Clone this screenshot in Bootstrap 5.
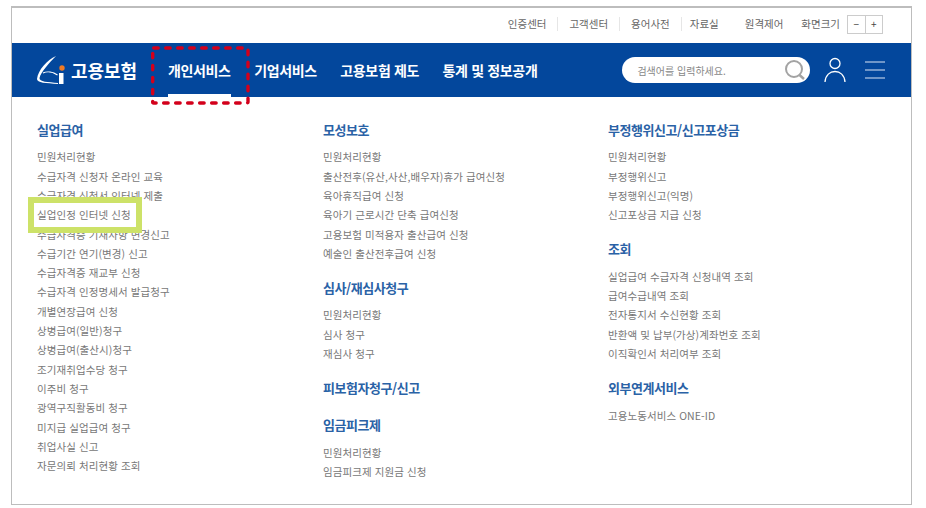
<!DOCTYPE html>
<html lang="ko"><head><meta charset="utf-8"><title>고용보험</title>
<link href="https://cdn.jsdelivr.net/npm/bootstrap@5.3.0/dist/css/bootstrap.min.css" rel="stylesheet">
<style>
html,body{margin:0;background:#fff;height:508px;overflow:hidden}
body{font-family:"Noto Sans CJK KR","Noto Sans",sans-serif;color:#666}
.frame{margin:6px 0 0 11px;width:901px;height:499px;border:1px solid #bdbdbd;border-top-width:2px;position:relative}
.topline{height:35px;padding:0 28px 3px 0;font-size:10.5px;color:#666;white-space:nowrap}
.topline .tl{padding:0 11px;line-height:14px;border-left:1px solid #e6e6e6}
.topline .tl:first-child,.topline .tl.nob{border-left:0}
.topline .tl.pr{padding-left:8px}
.topline .tl.rc{padding-left:15px}
.topline .tl.sz{padding:0 7px 0 7px}
.sizer{display:flex;border:1px solid #ccc;height:19px;width:36px;font-size:10px;line-height:16px;text-align:center;color:#444}
.sizer i{flex:1;font-style:normal}.sizer i+i{border-left:1px solid #ccc}
.band{height:54px;background:#03479c;padding-left:24px;color:#fff}
.brand{font-size:18px;font-weight:700;color:#fff;letter-spacing:-.1px;margin-left:4px;width:66px;white-space:nowrap;line-height:1}
.gnb{font-size:14px;font-weight:700;letter-spacing:-.35px;white-space:nowrap;margin-left:31px}
.gnb a{color:#fff;text-decoration:none;position:relative;display:block;height:54px;line-height:54px;margin-right:23.500px}
.gnb a.on::after{content:"";position:absolute;left:0;right:0;bottom:0;height:3px;background:#fff}
.sbox{width:188px;height:26px;border-radius:13px;background:#fff;margin-left:85px;font-size:10px;color:#888;padding:0 0 0 15px}
.usr{margin-left:14px}.ham{margin-left:19px}
.cols{padding:23px 0 0 25px}
.c1{width:286px}.c2{width:285px}.c3{flex:1}
.ttl{font-size:13px;font-weight:700;color:#2a62a6;letter-spacing:-.45px;line-height:20px;margin:0}
.lst{list-style:none;padding:0;margin:7.400px 0 14.900px;font-size:10.500px;letter-spacing:.08px;line-height:19.300px;color:#777;white-space:nowrap}
.hl{position:relative;z-index:1}
.hl::before{content:"";position:absolute;left:-9px;top:-8px;width:114px;height:35.500px;border:6px solid #cde268;background:#fff;z-index:-1}
.dash{position:absolute;left:139px;top:38px;width:100px;height:60px;overflow:visible}
.ttl.solo{margin-bottom:17px}
</style></head><body>
<div class="frame">
 <div class="topline d-flex align-items-center justify-content-end">
  <span class="tl">인증센터</span><span class="tl">고객센터</span><span class="tl">용어사전</span><span class="tl pr">자료실</span><span class="tl nob rc">원격제어</span><span class="tl nob sz">화면크기</span>
  <span class="sizer"><i>−</i><i>+</i></span>
 </div>
 <div class="band d-flex align-items-center">
  <svg width="31" height="30" viewBox="0 0 31 30"><path d="M20 1C11 5 2 15 1 24C1 28 10 28 22 29V28C12 27 3 27 3.500 23C5 17 13 8 20 1Z" fill="#fff"/><path d="M7 18C11 16 17 17 21.500 20" fill="none" stroke="#fff" stroke-width="1.100"/><rect x="23" y="18" width="4.500" height="11" fill="#fff"/><circle cx="26" cy="13" r="2.700" fill="#ee7a24"/></svg>
  <span class="brand">고용보험</span>
  <nav class="gnb d-flex">
   <a class="on" href="#">개인서비스</a><a href="#">기업서비스</a><a href="#">고용보험 제도</a><a href="#" class="me-0">통계 및 정보공개</a>
  </nav>
  <div class="sbox d-flex align-items-center justify-content-between"><span>검색어를 입력하세요.</span>
   <svg width="30" height="26" viewBox="0 0 30 26"><circle cx="14" cy="12" r="8" fill="none" stroke="#a3a3a3" stroke-width="2"/><path d="M19.500 18L24 22" stroke="#a3a3a3" stroke-width="2.500"/></svg></div>
  <svg class="usr" width="22" height="26" viewBox="0 0 22 26"><circle cx="11" cy="6.500" r="5" fill="none" stroke="#fff" stroke-width="1.300"/><path d="M1 25C1.500 18 6 14.500 11 14.500S20.500 18 21 25" fill="none" stroke="#fff" stroke-width="1.300"/></svg>
  <svg class="ham" width="20" height="18" viewBox="0 0 20 18"><path d="M0 1H20M0 9H20M0 17H20" stroke="#dbe6f4" stroke-width="1.100"/></svg>
 </div>
 <div class="cols d-flex">
  <div class="c1">
   <h6 class="ttl">실업급여</h6>
   <ul class="lst">
    <li>민원처리현황</li><li>수급자격 신청자 온라인 교육</li><li>수급자격 신청서 인터넷 제출</li><li class="hl">실업인정 인터넷 신청</li><li>수급자격증 기재사항 변경신고</li><li>수급기간 연기(변경) 신고</li><li>수급자격증 재교부 신청</li><li>수급자격 인정명세서 발급청구</li><li>개별연장급여 신청</li><li>상병급여(일반)청구</li><li>상병급여(출산시)청구</li><li>조기재취업수당 청구</li><li>이주비 청구</li><li>광역구직활동비 청구</li><li>미지급 실업급여 청구</li><li>취업사실 신고</li><li>자문의뢰 처리현황 조회</li>
   </ul>
  </div>
  <div class="c2">
   <h6 class="ttl">모성보호</h6>
   <ul class="lst"><li>민원처리현황</li><li>출산전후(유산,사산,배우자)휴가 급여신청</li><li>육아휴직급여 신청</li><li>육아기 근로시간 단축 급여신청</li><li>고용보험 미적용자 출산급여 신청</li><li>예술인 출산전후급여 신청</li></ul>
   <h6 class="ttl">심사/재심사청구</h6>
   <ul class="lst"><li>민원처리현황</li><li>심사 청구</li><li>재심사 청구</li></ul>
   <h6 class="ttl solo">피보험자청구/신고</h6>
   <h6 class="ttl">임금피크제</h6>
   <ul class="lst"><li>민원처리현황</li><li>임금피크제 지원금 신청</li></ul>
  </div>
  <div class="c3">
   <h6 class="ttl">부정행위신고/신고포상금</h6>
   <ul class="lst"><li>민원처리현황</li><li>부정행위신고</li><li>부정행위신고(익명)</li><li>신고포상금 지급 신청</li></ul>
   <h6 class="ttl">조회</h6>
   <ul class="lst"><li>실업급여 수급자격 신청내역 조회</li><li>급여수급내역 조회</li><li>전자통지서 수신현황 조회</li><li>반환액 및 납부(가상)계좌번호 조회</li><li>이직확인서 처리여부 조회</li></ul>
   <h6 class="ttl">외부연계서비스</h6>
   <ul class="lst"><li>고용노동서비스 ONE-ID</li></ul>
  </div>
 </div>
 <svg class="dash" viewBox="0 0 100 60"><rect x="1.700" y="2" width="95.300" height="55" rx="1" fill="none" stroke="#d3001b" stroke-width="3.400" stroke-linecap="round" stroke-dasharray="4.500 7.500"/></svg>
</div>
<script src="https://cdn.jsdelivr.net/npm/bootstrap@5.3.0/dist/js/bootstrap.bundle.min.js"></script>
</body></html>
